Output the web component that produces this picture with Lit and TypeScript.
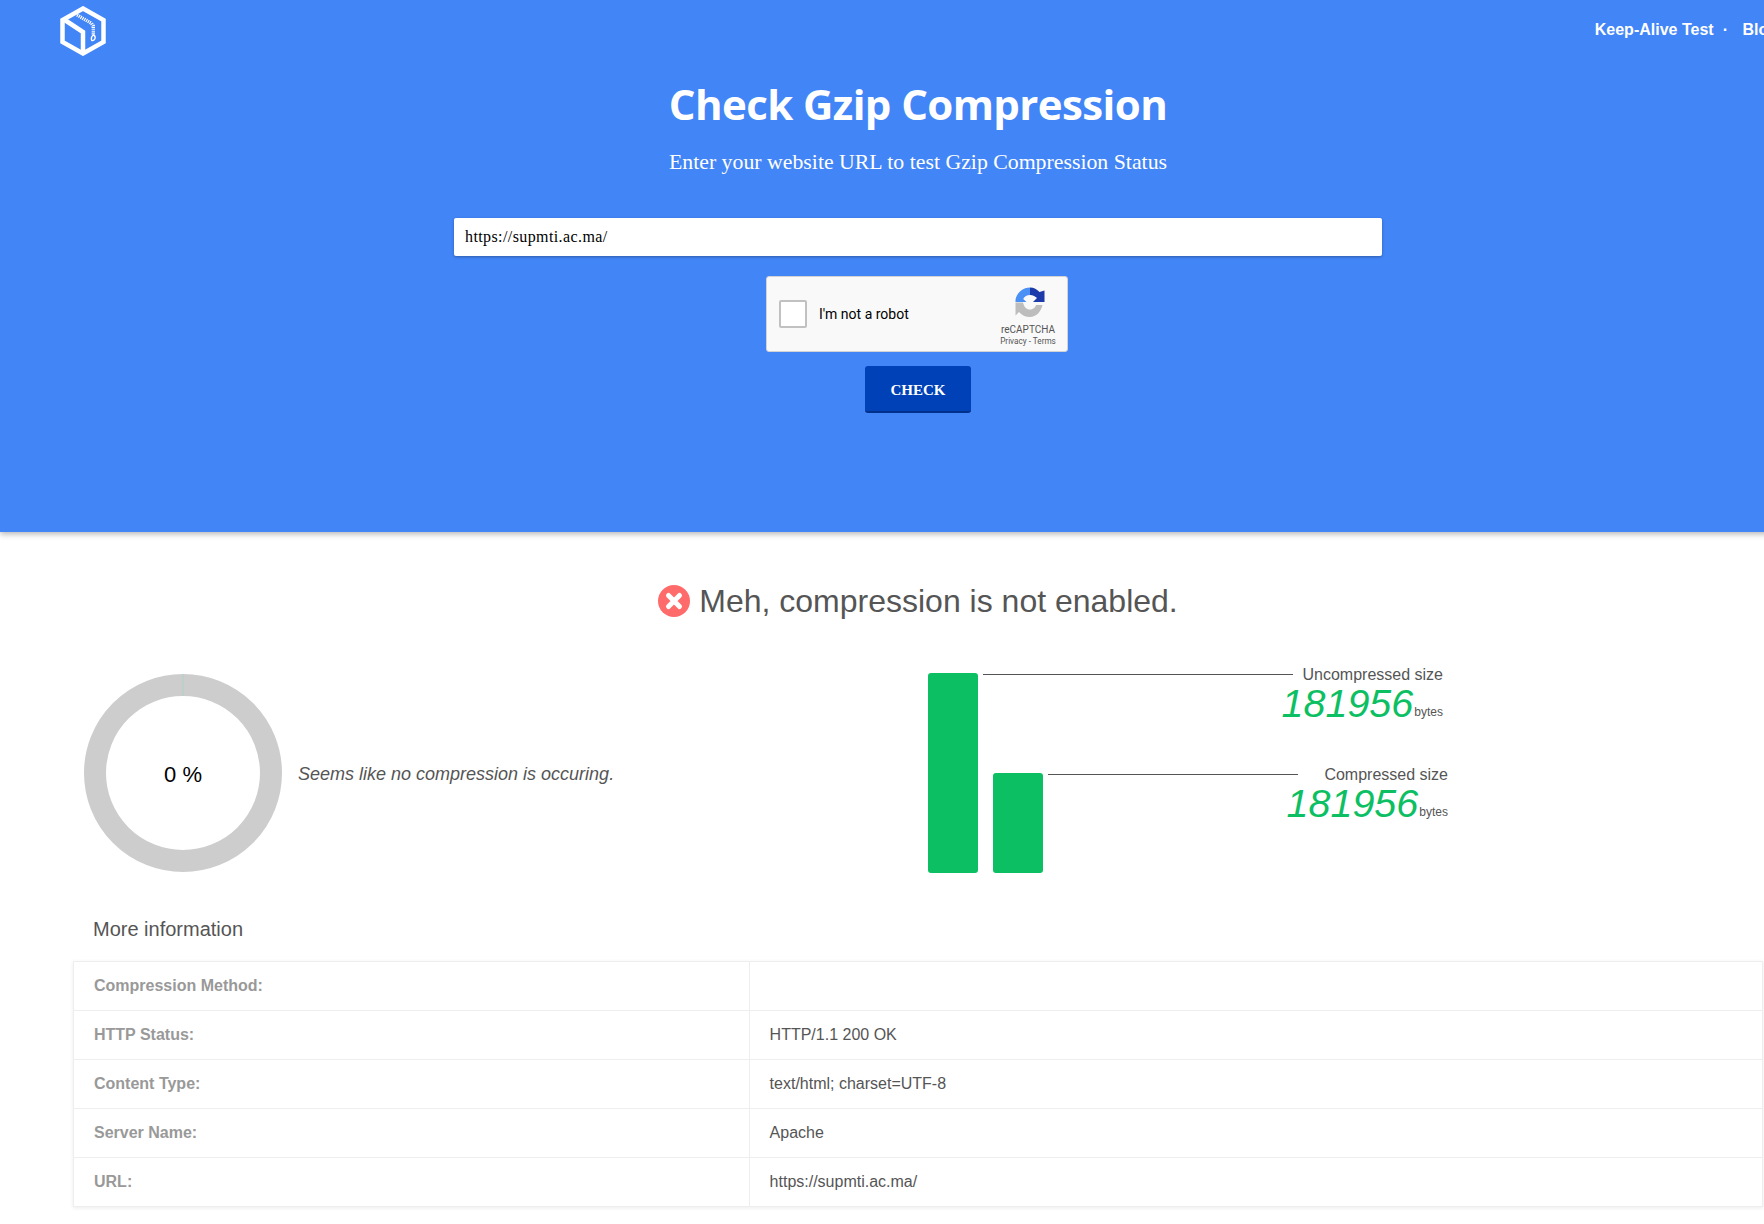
import { LitElement, html, css, svg } from "lit";
import { customElement } from "lit/decorators.js";

const ROWS: [string, string][] = [
  ["Compression Method:", ""],
  ["HTTP Status:", "HTTP/1.1 200 OK"],
  ["Content Type:", "text/html; charset=UTF-8"],
  ["Server Name:", "Apache"],
  ["URL:", "https://supmti.ac.ma/"],
];

const logo = svg`<svg class="logo" width="46" height="50" viewBox="0 0 46 50" fill="none" stroke="#fff">
  <path d="M23 2.5 43.5 14v22L23 47.5 2.5 36V14Z" stroke-width="4.5" stroke-linejoin="miter"/>
  <path d="M4 13.5 23 26v21" stroke-width="4.5"/>
  <path d="M17 9 31.5 17.3 33.3 20V29" stroke-width="3.4" stroke-dasharray="1.2 .9"/>
  <path d="M33.3 29c-1.8 1.5-2.2 4-1.5 5.5 1.5.4 3.2-.6 3.4-3 .1-1-.8-2-1.9-2.5Z" stroke-width="1.4"/>
</svg>`;

const captchaLogo = svg`<svg width="30" height="30" viewBox="0 0 30 30">
  <path d="M15 .5V8C12 8 9.5 9.5 8.2 12L11.5 15H.5V13C1.5 6 7.5.5 15 .5Z" fill="#4a90f5"/>
  <path d="M15 .5C19 .5 22 2.5 24.5 5L29.5 3.5V15H18L22 11C20.5 9.5 18 8 15 8Z" fill="#1c3aa9"/>
  <path d="M.5 15.5H8C9 20 11.5 22.5 15 22.5 18.5 22.5 20.5 20 21 18H27.5C26 25 21 30 15 30 10.5 30 6.5 28 4 25L.5 28.5Z" fill="#bdbdbd"/>
</svg>`;

const errorIcon = svg`<svg width="32" height="32" viewBox="0 0 32 32">
  <circle cx="16" cy="16" r="16" fill="#ff6b6b"/>
  <path d="M10.5 10.5 21.5 21.5M21.5 10.5 10.5 21.5" stroke="#fff" stroke-width="5" stroke-linecap="round"/>
</svg>`;

@customElement("app-root")
export class AppRoot extends LitElement {
  static styles = css`
    :host {
      display: block;
      height: 1224px;
      overflow: hidden;
      font-family: "Liberation Sans", Arial, sans-serif;
      color: #555;
      background: #fff;
    }
    .page {
      width: 1836px;
    }
    .hero {
      height: 532px;
      box-sizing: border-box;
      background: #4285f7;
      box-shadow: 0 2px 6px rgba(0, 0, 0, 0.3);
      color: #fff;
      position: relative;
      display: flex;
      flex-direction: column;
      align-items: center;
    }
    .nav {
      align-self: stretch;
      height: 58px;
      padding: 6px 58px 0 60px;
      box-sizing: border-box;
      display: flex;
      justify-content: space-between;
    }
    .links {
      display: flex;
      gap: 8px;
      font-weight: 700;
      font-size: 16px;
      line-height: 18px;
      padding-top: 15px;
    }
    .dot {
      padding: 0 6.5px 0 1px;
    }
    h1 {
      margin: 20px 0 0;
      font: 700 42px/52px "Open Sans", sans-serif;
      letter-spacing: -0.6px;
    }
    .lead {
      margin: 19px 0 0;
      font: 400 21.8px/26px "Liberation Serif", serif;
    }
    input {
      display: block;
      margin-top: 43px;
      width: 928px;
      height: 38px;
      padding: 0 10px 0 11px;
      box-sizing: border-box;
      border: 0;
      border-radius: 2px;
      background: #fff;
      box-shadow: 0 1px 3px rgba(0, 0, 0, 0.3);
      font: 16px "Liberation Serif", serif;
      letter-spacing: 0.4px;
      color: #000;
    }
    .captcha {
      margin: 20px 0 0 -2px;
      width: 302px;
      height: 76px;
      box-sizing: border-box;
      background: #f9f9f9;
      border: 1px solid #d3d3d3;
      border-radius: 3px;
      display: flex;
      align-items: center;
      padding: 0 9px 0 12px;
      font-family: Roboto, sans-serif;
      color: #000;
    }
    .box {
      width: 28px;
      height: 28px;
      box-sizing: border-box;
      border: 2px solid #c1c1c1;
      border-radius: 2px;
      background: #fff;
    }
    .robot {
      margin-left: 12px;
      font-size: 14px;
      flex: 1;
    }
    .brand {
      width: 60px;
      display: flex;
      flex-direction: column;
      align-items: center;
      color: #555;
      font-size: 10px;
      line-height: 11px;
      padding-top: 5px;
    }
    .brand svg {
      margin: 0 0 7px 3px;
    }
    .legal {
      margin-top: 1px;
      font-size: 8.2px;
      white-space: nowrap;
    }
    button {
      margin-top: 14px;
      width: 106px;
      height: 47px;
      padding: 3px 0 0;
      border: 0;
      border-bottom: 2px solid #00308a;
      border-radius: 3px;
      background: #0041b8;
      color: #fff;
      font: 700 15px "Liberation Serif", serif;
    }
    .status {
      margin: 51px 0 0;
      display: flex;
      justify-content: center;
      align-items: center;
      gap: 9px;
      font-size: 32px;
      font-weight: 400;
      line-height: 36px;
    }
    .charts {
      display: flex;
      margin-top: 54px;
      padding-left: 84px;
    }
    .ratio {
      width: 844px;
      display: flex;
      align-items: center;
      gap: 16px;
    }
    .donut {
      width: 198px;
      height: 198px;
      position: relative;
      display: grid;
      place-items: center;
      color: #000;
      font-size: 22px;
    }
    .donut svg {
      position: absolute;
      inset: 0;
    }
    .donut span {
      padding-top: 4px;
    }
    .note {
      font-size: 18px;
      font-style: italic;
      padding-top: 2px;
    }
    .sizes {
      display: grid;
      grid-template-columns: 50px 50px 1fr;
      grid-template-rows: 100px 100px;
      column-gap: 15px;
    }
    .bar {
      background: #0dbf63;
      border-radius: 3px;
    }
    .bar.tall {
      grid-row: 1 / 3;
    }
    .bar.short {
      grid-column: 2;
      grid-row: 2;
    }
    .callout {
      margin: -7px 0 0 -10px;
      font-size: 16px;
      line-height: 18px;
    }
    .callout.first {
      grid-column: 2 / 4;
      grid-row: 1;
      width: 460px;
    }
    .callout.second {
      grid-column: 3;
      grid-row: 2;
      width: 400px;
    }
    .label {
      display: flex;
      align-items: center;
      gap: 10px;
      white-space: nowrap;
    }
    .callout.second .label {
      gap: 26px;
    }
    .label i {
      flex: 1;
      height: 1px;
      margin-bottom: 2px;
      background: #555;
    }
    .count {
      display: flex;
      justify-content: flex-end;
      align-items: flex-end;
      gap: 1px;
      height: 37px;
    }
    .count b {
      font-size: 39.5px;
      line-height: 36px;
      font-weight: 400;
      font-style: italic;
      color: #0dbf63;
    }
    .count span {
      font-size: 12px;
      line-height: 14px;
      padding-bottom: 2px;
    }
    h2 {
      margin: 44px 0 0 93px;
      font-size: 20px;
      font-weight: 400;
      line-height: 24px;
    }
    table {
      margin: 20px 0 0 73px;
      width: 1690px;
      border-collapse: collapse;
      table-layout: fixed;
      box-shadow: 0 1px 4px rgba(0, 0, 0, 0.08);
      font-size: 16px;
    }
    td {
      height: 49px;
      box-sizing: border-box;
      padding: 0 20px;
      border: 1px solid #eee;
    }
    td:first-child {
      width: 40%;
      font-weight: 700;
      color: #999;
    }
  `;

  render() {
    return html`
      <div class="page">
        <header class="hero">
          <nav class="nav">
            ${logo}
            <div class="links">
              <span>Keep-Alive Test</span><span class="dot">·</span><span>Blog</span>
            </div>
          </nav>
          <h1>Check Gzip Compression</h1>
          <p class="lead">Enter your website URL to test Gzip Compression Status</p>
          <input type="text" .value=${"https://supmti.ac.ma/"} />
          <div class="captcha">
            <div class="box"></div>
            <span class="robot">I'm not a robot</span>
            <div class="brand">
              ${captchaLogo}
              <span>reCAPTCHA</span>
              <span class="legal">Privacy - Terms</span>
            </div>
          </div>
          <button>CHECK</button>
        </header>

        <h3 class="status">${errorIcon}<span>Meh, compression is not enabled.</span></h3>

        <section class="charts">
          <div class="ratio">
            <div class="donut">
              <svg width="198" height="198" viewBox="0 0 198 198">
                <circle cx="99" cy="99" r="88" fill="none" stroke="#cdcdcd" stroke-width="22" />
                <path d="M99 0.5V22" stroke="#a9d5c4" stroke-width="1" />
              </svg>
              <span>0 %</span>
            </div>
            <span class="note">Seems like no compression is occuring.</span>
          </div>
          <div class="sizes">
            <div class="bar tall"></div>
            <div class="bar short"></div>
            <div class="callout first">
              <div class="label"><i></i><span>Uncompressed size</span></div>
              <div class="count"><b>181956</b><span>bytes</span></div>
            </div>
            <div class="callout second">
              <div class="label"><i></i><span>Compressed size</span></div>
              <div class="count"><b>181956</b><span>bytes</span></div>
            </div>
          </div>
        </section>

        <h2>More information</h2>
        <table>
          ${ROWS.map(([k, v]) => html`<tr><td>${k}</td><td>${v}</td></tr>`)}
        </table>
      </div>
    `;
  }
}
